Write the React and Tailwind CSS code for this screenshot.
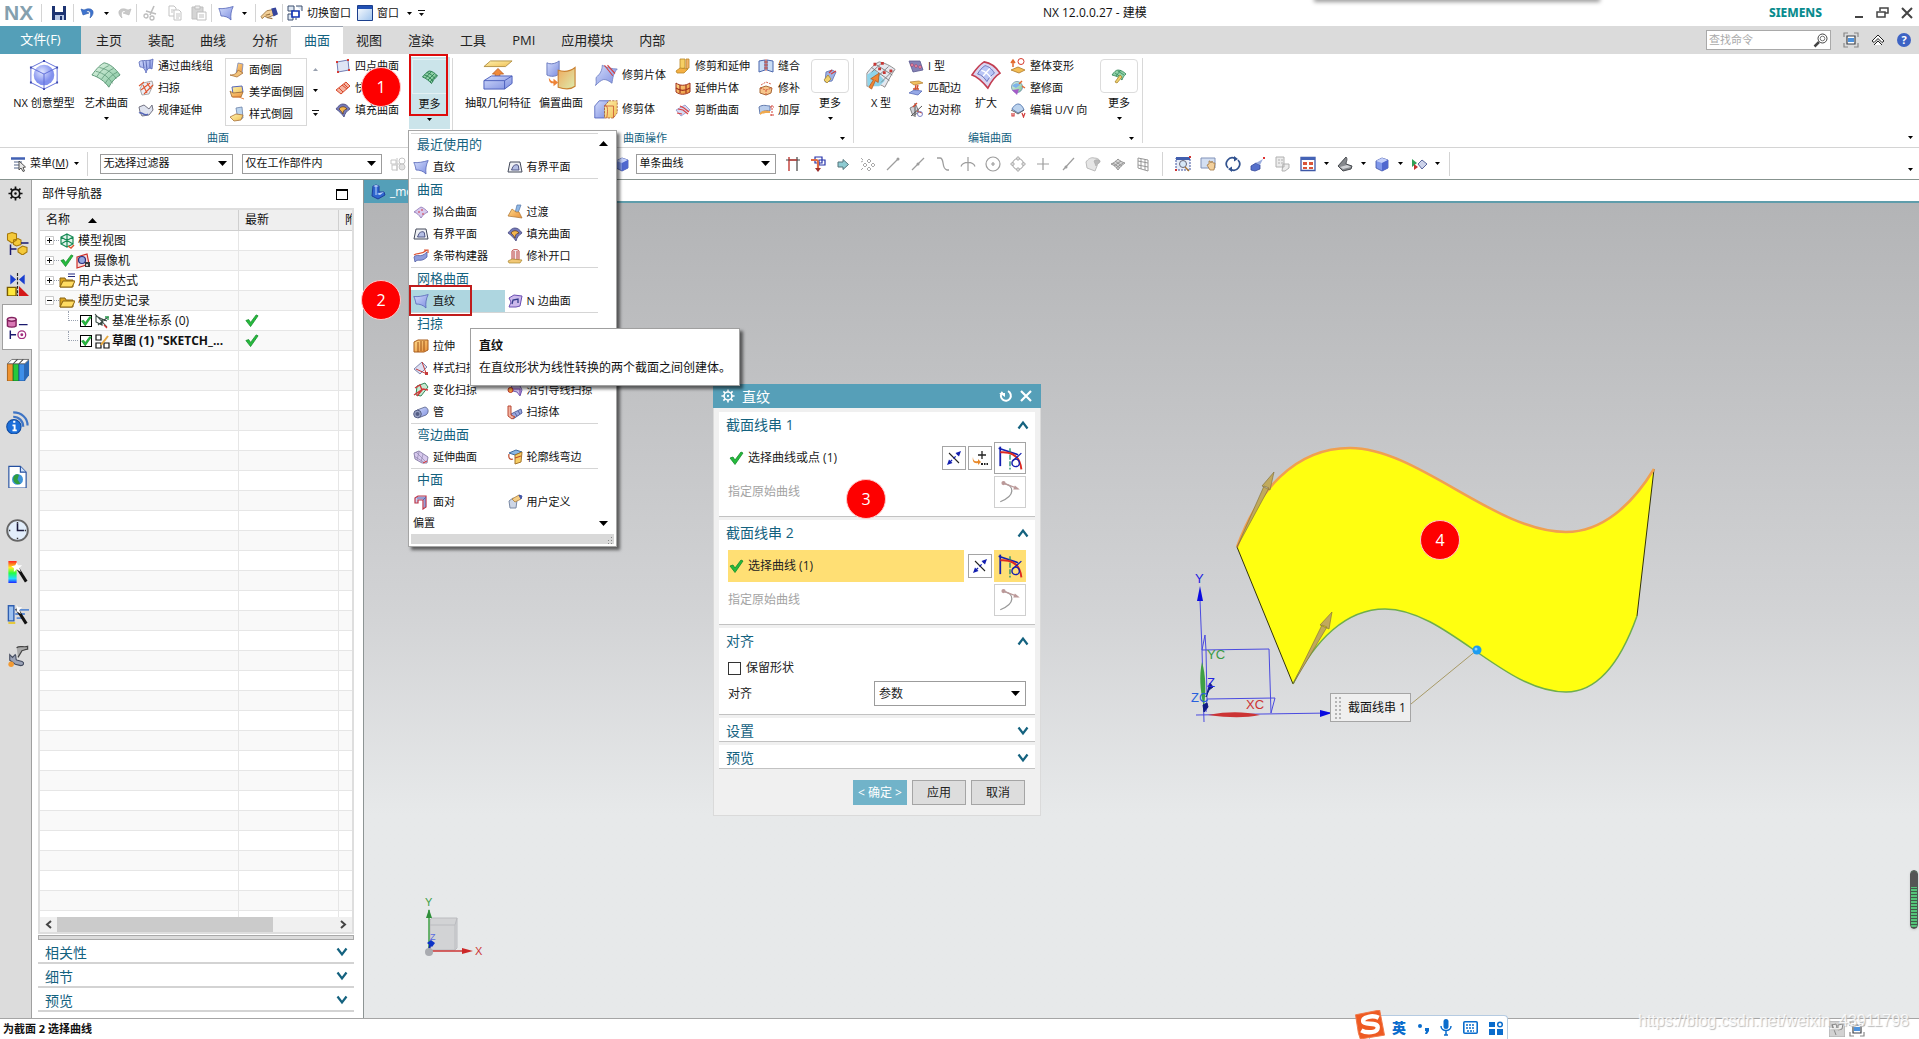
import { useState } from "react";

const icons = {
  ruled: <path d="M.8 3.500C5 4 10 3 15.200 1.500C13 6 12.500 10 13 15C10 12 7 11 3 11C2.500 8 2 6 .8 3.500Z" fill="url(#blue)" stroke="#5566b8" strokeWidth=".8" />,
  through: <><path d="M1 4C4 1 10 4 15 1L14 11C11 9 9 11 8 15C7 10 4 9 2 9Z" fill="url(#blue)" stroke="#5566b8" strokeWidth=".8" /><path d="M5 3L6 10M8 3L9 12M12 2L12 10" stroke="#4a59a8" fill="none" strokeWidth=".8" /></>,
  sweep: <><path d="M2 9L5 3L14 1L15 5L11 14L4 15Z" fill="#eceef5" stroke="#888" strokeWidth=".7" /><path d="M1 6L6 2M3 10L12 3M6 14L15 5M5 5L9 13M9 3L13 9" stroke="#e0562f" strokeWidth="1.100" fill="none" /></>,
  law: <><path d="M1 5L6 3L11 7L14 3L15 8L11 13L4 14L2 10Z" fill="#dfe3ef" stroke="#667" strokeWidth=".9" /><path d="M1 11C4 9 6 15 10 12" stroke="#5566b8" strokeWidth="1.500" fill="none" /></>,
  faceBlend: <><path d="M9 1L14 2L13 11L7 12Z" fill="url(#orange)" stroke="#7a88b8" strokeWidth=".8" /><path d="M1 13C6 13 8 11 9 8L14 11L8 15Z" fill="#f2c27a" stroke="#a8713a" strokeWidth=".8" /></>,
  aesthetic: <><path d="M3 3L13 2L14 8L4 10Z" fill="url(#yellow)" stroke="#5566b8" /><path d="M1 7L4 9L14 8L12 13L3 13Z" fill="url(#orange)" stroke="#9d6a32" strokeWidth=".8" /><path d="M4 13L10 13L15 15" stroke="#e4813b" fill="none" /></>,
  styled: <><path d="M7 2L13 1L14 12L9 14Z" fill="#bdd5ee" stroke="#6b82a8" strokeWidth=".8" /><path d="M1 11L7 8L14 9L12 14L5 15Z" fill="url(#yellow)" stroke="#a8713a" strokeWidth=".8" /></>,
  fourPoint: <><path d="M2 4L13 2L14 12L3 14Z" fill="#dfe5f4" stroke="#7580b5" /><path d="M1 3h2v2h-2zM12 1h2v2h-2zM13 11h2v2h-2zM2 13h2v2h-2z" fill="#d83a32" /></>,
  rapid: <><path d="M1 10L11 2L15 6L6 14Z" fill="#f4b2a0" stroke="#d9482b" /><path d="M4 8L8 12M7 5L12 9M9 4L13 8" stroke="#d9482b" /></>,
  fill: <><path d="M1 7C4 3 6 2 8 2C11 2 13 4 15 7C12 9 10 11 9 15C7 12 4 9 1 7Z" fill="#7478b6" stroke="#45487d" strokeWidth=".8" /><path d="M4 7C6 4 10 4 12 7C9 7 8 10 8 12C7 10 6 9 4 7Z" fill="#f4b64c" stroke="#5b3a1c" strokeWidth=".7" /></>,
  greenMesh: <><path d="M.5 8C3 5 5 3 7 2C10 2 13 4 15.500 7C13 9 11 11 9.500 14.500C7 12 4 9 .5 8Z" fill="#8fd0a6" stroke="#1d7546" strokeWidth=".9" /><path d="M2.500 6C6 7 9 9 11 12.500M5 3.500C8 4.500 11 7 13 9.500M3.500 9L9.500 2.500M6 11L12.500 4.500M8 13L14.500 6" stroke="#1d7546" strokeWidth=".8" fill="none" /></>,
  trimExtend: <><path d="M5 1L10 1L10 10L5 11Z" fill="#f6cf64" stroke="#b98626" strokeWidth=".8" /><path d="M11 1L14 1L14 10L11 11Z" fill="#f3b26c" stroke="#b98626" strokeWidth=".8" /><path d="M1 13L5 10L13 11L9 15L2 15Z" fill="#f5b043" stroke="#b98626" strokeWidth=".8" /></>,
  extendSheet: <><path d="M1 3C5 6 10 6 15 3L15 12C10 15 5 15 1 12Z" fill="url(#orange)" stroke="#a1321f" /><path d="M1 8C5 11 10 11 15 8M5 5L5 13M11 5L11 13" stroke="#a1321f" strokeWidth="1.200" fill="none" /></>,
  divide: <><path d="M1 8L10 3L15 8L6 14Z" fill="#d7daf2" stroke="#8b90c9" strokeWidth=".8" /><path d="M3 7L8 8L13 12M5 4L9 6L14 10M2 11L7 12" stroke="#dc4140" fill="none" strokeWidth="1.100" /></>,
  sew: <><path d="M1 3L7 2L7 12L1 14ZM9 2L15 3L15 14L9 12Z" fill="#c9ddf5" stroke="#4b66ad" /><path d="M8 1L8 13M6 4h4M6 7h4M6 10h4" stroke="#c0483c" strokeWidth=".9" /></>,
  patch: <><path d="M2 8L8 6L14 8L13 13L8 15L2 13Z" fill="#f7c68b" stroke="#a86a3a" /><path d="M2 8L8 10L14 8M8 10L8 15M3 5L8 2L13 4" stroke="#d1523a" strokeWidth=".9" fill="none" strokeDasharray="2 1" /></>,
  thicken: <><path d="M1 5C5 2 9 4 12 4L12 9C8 8 4 9 2 12Z" fill="#b9cdec" stroke="#647cae" /><path d="M2 11C5 8 8 8 12 9L12 11C8 11 5 11 2 13Z" fill="#f0a94e" /><path d="M14 3v12M12 5h4M12 13h4" stroke="#d44236" strokeDasharray="2 1" /></>,
  iform: <><path d="M1 3L12 3L15 12L5 14Z" fill="#8481b5" stroke="#5b598f" strokeWidth=".8" /><path d="M3 6h2v2h-2zM7 7h2v2h-2zM11 8h2v2h-2z" fill="#fff" stroke="#c7335a" strokeWidth=".8" /></>,
  match: <><path d="M2 2L11 1L15 3L6 5Z" fill="#f3c15e" stroke="#b07a2b" strokeWidth=".7" /><path d="M8 5L7 10M10 5L9 9M5 9h6" stroke="#d4502d" strokeWidth="1.400" /><path d="M1 13L6 10L14 11L10 15Z" fill="#96a9e6" stroke="#4d62b1" strokeWidth=".7" /></>,
  symmetry: <><path d="M2 6L8 3L11 10L5 14Z" fill="#d0d2d8" stroke="#777" strokeWidth=".9" /><path d="M7 1L7 15M3 14L14 4" stroke="#444" strokeWidth=".9" /><path d="M5 5L9 1M9 9L14 11" stroke="#d8482d" strokeWidth="1.300" /><circle cx="12" cy="12" r="2.500" fill="none" stroke="#7d82c9" /></>,
  deform: <><circle cx="11" cy="3.500" r="3" fill="none" stroke="#d4392c" /><path d="M3 9V3M1 5L3 2L5 5" stroke="#e2692d" fill="none" strokeWidth="1.500" /><path d="M1 12L8 9L15 12L9 15Z" fill="#f3bd54" stroke="#af7a2b" strokeWidth=".8" /></>,
  refit: <><circle cx="7" cy="7" r="5.500" fill="url(#green)" stroke="#6989a8" strokeWidth=".8" /><path d="M2 10L7 15L9 9Z" fill="#a45cc8" /><path d="M9 4L12 1M12 6L15 8" stroke="#e36a31" strokeWidth="1.500" /><path d="M2 6C5 2 9 3 10 5L6 8Z" fill="#7db2ea" /></>,
  uv: <><path d="M2 7C4 3 7 2 8 2C11 2 13 5 14 8L8 11Z" fill="#bcd3ee" stroke="#5c7fb4" /><path d="M1 8L5 10L8 12L14 8" stroke="#555" fill="none" strokeWidth=".9" /><path d="M2 11v3h2v-3M12 11L13.500 15L15 11" stroke="#d23c3c" fill="none" strokeWidth="1.200" /></>,
  moreOps: <><path d="M4 4L10 2L14 4L10 13L3 14Z" fill="#9fb2e4" stroke="#596eb0" strokeWidth=".8" /><path d="M7 5L10 2M9 6L14 3" stroke="#d44040" strokeWidth="1.300" /><path d="M2 12L6 7L9 11L5 15Z" fill="#f0d16f" stroke="#a8862f" strokeWidth=".8" /></>,
  moreEdit: <><path d="M1 7C3 4 5 2 7 2C10 2 13 4 15 6C13 8 12 9 11 12C8 9 5 8 1 7Z" fill="#8fd0a6" stroke="#2b8153" strokeWidth=".8" /><path d="M4 5L11 10M7 3L13 7M5 8L10 2" stroke="#2b8153" strokeWidth=".7" /><path d="M4 14L9 7L11 9L6 15Z" fill="#f0d16f" stroke="#a8862f" strokeWidth=".8" /></>,
  bounded: <><path d="M3 3L13 3L15 13L1 13Z" fill="#eef0f4" stroke="#444a5a" /><path d="M4.500 11L6 7.500C8 5 12 5 11.500 8L12 11Z" fill="#b4bee4" stroke="#444a7a" strokeWidth=".9" /></>,
  fit: <><path d="M1 8C4 6 6 4 8 3C11 4 13 6 15 8C12 9 10 11 8 14C6 11 4 9 1 8Z" fill="#d8caec" stroke="#8a72b4" strokeWidth=".8" /><circle cx="6" cy="8" r=".8" fill="#c23" /><circle cx="9" cy="6" r=".8" fill="#c23" /><circle cx="10" cy="10" r=".8" fill="#c23" /></>,
  transition: <><path d="M10 1L14 1L11 9L8 9Z" fill="#8fb8e6" stroke="#5475a8" strokeWidth=".7" /><path d="M5 5L9 8L12 8L15 14L8 13L1 12Z" fill="url(#orange)" stroke="#ab7330" strokeWidth=".7" /></>,
  ribbon: <><path d="M1 9C4 5 7 11 14 4L14 9C8 15 5 10 2 14Z" fill="#8e9cdc" stroke="#4f5ca3" strokeWidth=".8" /><path d="M1 7C5 4 7 8 14 2M11 2h4v3" stroke="#dc5130" strokeWidth="1.200" fill="none" /></>,
  opening: <><path d="M5 3C6 1 11 1 12 3L12 12L5 12Z" fill="#f3e9ee" stroke="#bb3f3a" /><path d="M7 3v9M10 3v9" stroke="#bb3f3a" /><path d="M1 13L5 11L15 12L13 15L2 15Z" fill="#f2c877" stroke="#a8862f" strokeWidth=".7" /></>,
  nside: <><path d="M2 5L7 2L15 3L13 13L9 14L2 14L4 9Z" fill="#ccb9ec" stroke="#6b4eb2" /><path d="M5 11L6 7L11 6L11 10" stroke="#333d8a" fill="none" strokeWidth="1.300" /></>,
  extrude: <><path d="M1 4L5 2L15 2L15 12L11 14L1 14Z" fill="url(#orange)" stroke="#a85d1d" /><path d="M5 4v10M8 3v10M11 3v10" stroke="#9c5117" /></>,
  styledSweep: <><path d="M1 9L9 2L14 7L7 14Z" fill="#dcdff2" stroke="#8186ae" /><path d="M3 9L14 14M9 2L13 13" stroke="#c53b3b" /><path d="M12 12h3v3h-3z" fill="#c53b3b" /></>,
  variational: <><path d="M4 4L12 1L15 5L8 14L3 13Z" fill="#c7ead2" stroke="#37875a" /><path d="M2 6L7 3L9 8L4 14M1 13L10 7L15 8" stroke="#d3373a" strokeWidth="1.400" fill="none" /></>,
  guide: <><path d="M4 3L12 2L15 8L13 14L10 10L6 9Z" fill="#cfbdeb" stroke="#7160b4" /><circle cx="3.500" cy="8" r="2.500" fill="#f5a13f" stroke="#b9322a" /><path d="M6 7L13 7L13 13" stroke="#7d42a5" fill="none" /></>,
  tube: <><path d="M4 6L12 3C16 4 16 9 13 11L5 14Z" fill="url(#blue)" stroke="#555e85" strokeWidth=".8" /><circle cx="4.500" cy="10" r="3.800" fill="#9aa3c5" stroke="#555e85" /><circle cx="4.500" cy="10" r="2" fill="#555e85" /></>,
  sweepSolid: <><path d="M4 10L14 5L15 9L6 15Z" fill="#9ba8dd" stroke="#54619f" /><path d="M1 2L4 2L4 11L8 13L5 15L1 12Z" fill="#f2b3a2" stroke="#b94833" /><path d="M8 9L10 12M11 7L13 10" stroke="#54619f" /></>,
  extSurface: <><path d="M1 4L6 2L15 8L14 14L9 14L2 10Z" fill="#d8c9ee" stroke="#8f86ad" /><path d="M3 3L13 13M1 7L12 14M10 5L8 13M6 3L4 11" stroke="#8f86ad" strokeWidth=".7" /><path d="M10 14L14 12" stroke="#d33" /></>,
  flange: <><path d="M2 4L9 1L15 3L8 6Z" fill="#8ab8e4" stroke="#3e6c9e" /><path d="M8 6L15 3L14 13L8 15Z" fill="#f5cd64" stroke="#a5752a" /><path d="M8 9L14 7M2 5C1 10 4 11 6 10" stroke="#bf4d2c" fill="none" strokeWidth="1.200" /></>,
  facePair: <><path d="M2 4L5 2L13 2L13 13L10 15L10 6L5 6L5 9L2 9Z" fill="#cdd0ee" stroke="#bd3548" strokeWidth="1.200" /><path d="M4 4h8v9M10 6l3-3" fill="none" stroke="#5560b0" strokeWidth=".9" /></>,
  custom: <><path d="M2 7L6 4L10 6L9 14L3 14Z" fill="#cdd6e6" stroke="#7989a5" /><path d="M5 5L12 1L14 5L8 8Z" fill="#f6ce86" stroke="#a97c38" strokeWidth=".8" /><path d="M12 1L15 2L14 5Z" fill="#4356a8" stroke="#4356a8" /></>,
  save: <><path d="M1 1h14v14h-14z" fill="#1d3472" /><path d="M4 1h8v6h-8z" fill="#fff" /><path d="M4 10h9v5h-9z" fill="#b8c8e6" /><path d="M9 11h2v4h-2z" fill="#1d3472" /></>,
  undo: <path d="M1 4L3 10L9 8L6 7C9 4 12 7 10 13C16 8 13 1 4 5Z" fill="#3d73cf" stroke="#2a57aa" strokeWidth=".6" />,
  redo: <path d="M15 4L13 10L7 8L10 7C7 4 4 7 6 13C0 8 3 1 12 5Z" fill="#c9c9c9" stroke="#b8b8b8" strokeWidth=".6" />,
  cut: <><path d="M11 1L7 10M3 6L13 9" stroke="#bdbdbd" strokeWidth="1.600" /><circle cx="3" cy="11" r="2" fill="none" stroke="#bdbdbd" strokeWidth="1.300" /><circle cx="9" cy="13" r="2" fill="none" stroke="#bdbdbd" strokeWidth="1.300" /></>,
  copy: <><path d="M2 1h5l2 2v8h-7z" fill="#fff" stroke="#c3c3c3" /><path d="M7 5h5l2 2v8h-7z" fill="#fff" stroke="#c3c3c3" /><path d="M9 9h4M9 11h4M9 13h3M4 5h3M4 7h2" stroke="#c3c3c3" /></>,
  paste: <><path d="M1 2h11v12h-11z" fill="#d5d5d5" stroke="#bfbfbf" /><path d="M4 1h5v3h-5z" fill="#eee" stroke="#bfbfbf" /><path d="M6 7h9v8h-9z" fill="#fff" stroke="#bfbfbf" /><path d="M8 10h5M8 12h5" stroke="#bfbfbf" /></>,
  hand: <><path d="M1 11L6 6L11 5L12 10L7 12L4 11L2 13Z" fill="#f3cf96" stroke="#9c7440" strokeWidth=".8" /><path d="M10 4L14 3L16 9L12 11Z" fill="#36459c" /><path d="M5 10L9 9M6 12L11 13" stroke="#9c7440" /></>,
  switch: <><path d="M1 1h6v5h-6zM9 1h6v5M1 9h5v6h-5zM9 13v2" fill="#dfe8f3" stroke="#3c4f6e" /><path d="M5 6h7v6h-7z" fill="#fff" stroke="#1335b4" strokeWidth="1.700" /></>,
  window: <><path d="M.5 .5h15v15h-15z" fill="url(#pale)" stroke="#1b3f8d" /><path d="M1 1h14v3h-14z" fill="#2150b4" /></>,
  menu: <><path d="M1 2h14M1 3h14" stroke="#4261b4" strokeWidth="1.500" /><path d="M4 6h8M4 9h5M4 12h5" stroke="#8c98b0" strokeWidth="1.400" /><path d="M9 5L9 14L11 12L13 15.500L14.500 15L13 11.500L15.500 11Z" fill="#e6e6e6" stroke="#444" strokeWidth=".9" /></>,
  greyTree: <><path d="M1 4h5v4h-5zM2 9h5v5h-5zM7 2v13M7 8h3" fill="none" stroke="#c4c4c4" /><circle cx="12" cy="5" r="3" fill="none" stroke="#c4c4c4" /><circle cx="12" cy="11" r="3" fill="#e2e2e2" stroke="#c4c4c4" /></>,
  cube: <><path d="M2 5L8 2L14 4L14 12L8 15L2 12Z" fill="#7f97ea" stroke="#3e50a6" strokeWidth=".8" /><path d="M2 5L8 7L14 4L8 2Z" fill="#c5d1fa" /><path d="M8 7L14 4L14 12L8 15Z" fill="#5068cf" /></>,
  rail: <><path d="M4 1v14" stroke="#c03a34" strokeWidth="1.400" /><path d="M12 1v14M1 4h14" stroke="#444" strokeWidth="1.200" /><path d="M4 4h8" stroke="#c03a34" strokeWidth="1.400" /></>,
  follow: <><path d="M5 1h7v6h-7zM9 4h6v5h-6z" fill="#fff" stroke="#2632a9" strokeWidth="1.200" /><path d="M1 4h5c2 0 2 1 2 3v6" stroke="#df6a44" strokeWidth="2.200" fill="none" /><path d="M5 12h6l-3 4z" fill="#9b2f2f" /></>,
  next: <path d="M3 6h5V3.500l5.500 5-5.500 5v-2.500h-5z" fill="#8ecbd2" stroke="#55757b" />,
  snap: <><path d="M9 3l2 2-2 2-2-2zM9 11l2 2-2 2-2-2zM5 7l2 2-2 2-2-2zM13 7l2 2-2 2-2-2z" fill="none" stroke="#a9a9a9" /><path d="M1 2l2 2M1 6l2-1M1 14l2-2" stroke="#a9a9a9" /></>,
  line1: <><path d="M2 14L13 3" stroke="#9d9d9d" strokeWidth="1.200" /><circle cx="13" cy="3" r="1.500" fill="#9d9d9d" /></>,
  line2: <><path d="M2 14L14 2" stroke="#9d9d9d" strokeWidth="1.200" /><circle cx="8" cy="8" r="1.500" fill="#9d9d9d" /></>,
  scurve: <path d="M2 2h3c5 0 1 11 7 12h2" stroke="#9d9d9d" strokeWidth="1.300" fill="none" />,
  arcCross: <path d="M1 10.500C3 5 13 5 15 10.500M8 1v14" stroke="#9d9d9d" strokeWidth="1.200" fill="none" />,
  circleDot: <><circle cx="8" cy="8" r="7" stroke="#9d9d9d" fill="none" strokeWidth="1.200" /><path d="M8 6v4M6 8h4" stroke="#9d9d9d" strokeWidth="1.200" /></>,
  quad: <><circle cx="8" cy="8" r="5.500" stroke="#9d9d9d" fill="none" /><path d="M7 1h2v3H7zM7 12h2v3H7zM1 7h3v2H1zM12 7h3v2h-3z" fill="#fff" stroke="#9d9d9d" strokeWidth=".8" /></>,
  plus: <path d="M8 2v12M2 8h12" stroke="#9d9d9d" strokeWidth="1.200" />,
  slash: <><path d="M3 14L14 2" stroke="#9d9d9d" strokeWidth="1.200" /><circle cx="6" cy="11" r="1.500" fill="#9d9d9d" /></>,
  greyFace: <><path d="M1 6C3 3 6 1 9 2C12 2 14 3 15 5C15 8 12 7 12 10L10 15L2 12Z" fill="#e5e5e5" stroke="#bbb" /><path d="M9 5C11 3 14 4 15 5C14 8 12 7 11 10Z" fill="#b9b9b9" stroke="#aaa" strokeWidth=".7" /></>,
  greyMesh: <><path d="M1 8C4 7 6 5 8 3C10 5 12 6 15 7C12 9 10 11 8 14C6 11 4 9 1 8Z" fill="#d4d4d4" stroke="#979797" /><path d="M5 5L12 10M3 7L10 12M4 10L11 5M6 12L13 7" stroke="#979797" /></>,
  greyGrid: <path d="M3 2L13 4V15L3 12ZM6 3v10M10 3v11M3 5l10 2M3 9l10 2" fill="none" stroke="#979797" />,
  zoomFit: <><path d="M1 2h14v12H1z" fill="#e7edf8" stroke="#3f539e" strokeDasharray="2 1" /><path d="M1 1h14v3H1z" fill="#425fae" /><circle cx="8" cy="8" r="3.500" fill="#d6e7f6" stroke="#667" /><path d="M10 11l4 4" stroke="#a8732f" strokeWidth="1.500" /><path d="M0 13h2v2H0zM14 0h2v2h-2z" fill="#c33" /></>,
  pan: <><path d="M1 2h14v10H1z" fill="#d3dff2" stroke="#8192b8" /><path d="M7 9L9 8V5h1l1 2 1-2 1 2 2 0L14 14H10Z" fill="#f3d09b" stroke="#a37a45" strokeWidth=".8" /></>,
  rotate: <><path d="M3 12A6 6 0 0 1 10 2.500M13 4A6 6 0 0 1 6 13.500" stroke="#31528f" strokeWidth="1.700" fill="none" /><path d="M9 0l4 3-4 2.500zM7 16l-4-3 4-2.500z" fill="#31528f" /></>,
  perspective: <><path d="M1 10L6 7L10 9L10 13L5 15L1 14Z" fill="#5570cb" stroke="#33479a" strokeWidth=".8" /><path d="M6 7L13 3L10 9Z" fill="#9badde" /><path d="M13 1h2v2h-2z" fill="#d33" /></>,
  greySheets: <path d="M1 1h8v10H1zM3 4h2M6 4h2M3 7h2M6 7h2M8 8h6v4L10 15H7z" fill="#ececec" stroke="#b0b0b0" />,
  windowRed: <><path d="M1 1.500h14v13H1z" fill="#fff" stroke="#3e58a8" strokeWidth="1.300" /><path d="M1 1h14v3H1z" fill="#4463b6" /><path d="M3 6h4v3H3zM9 6h4v3H9zM3 11h4v2H3zM9 11h4v2H9z" fill="#d9563b" /></>,
  greySolid: <><path d="M1 10L9 1C11 3 9 6 9 8L15 10L14 13L6 15Z" fill="#85888c" stroke="#484b50" /><path d="M3 11L10 9L14 11L6 13Z" fill="#d0d2d5" /></>,
  clip: <><path d="M1 3L6 7L1 11Z" fill="#2fa157" /><path d="M3 8l4 3-4 3z" fill="#c23131" /><path d="M11 4l5 4-5 5-4-5z" fill="#cdd3ea" stroke="#59669d" /></>,
  full: <><path d="M1 5V1H5M11 1h4v4M15 11v4h-4M5 15H1v-4" fill="none" stroke="#888" strokeWidth="1.200" /><path d="M4 4h8v8H4z" fill="#fff" stroke="#3d4148" strokeWidth="1.200" /><path d="M5 6h6v4H5z" fill="#4d92dd" /></>,
  doc: <><path d="M3 2L6 1L9 2V8L14 8L15 11L8 15L2 12Z" fill="#2f66cf" stroke="#1e3f9c" /><path d="M3 2L6 1L9 2L6 3ZM9 9L14 8L10 11L7 10Z" fill="#bcd5fb" /><path d="M6 3V11" stroke="#bcd5fb" /></>,
  gear: <><circle cx="8" cy="8" r="4.500" fill="none" stroke="currentColor" strokeWidth="1.800" /><circle cx="8" cy="8" r="1.300" fill="currentColor" /><path d="M8 .5v3M8 12.500v3M.5 8h3M12.500 8h3M2.700 2.700l2 2M11.300 11.300l2 2M2.700 13.300l2-2M11.300 4.700l2-2" stroke="currentColor" strokeWidth="1.800" /></>,
  views: <><path d="M8 1L14 4V11L8 14L2 11V4ZM8 1V14M2 4L14 11M14 4L2 11" fill="#e5f4ec" stroke="#168a54" strokeWidth="1.200" /><path d="M9 13l3 2 3-3" stroke="#e0562f" strokeWidth="1.400" fill="none" /></>,
  camera: <><path d="M2 4L12 1L14 11L2 15Z" fill="#f6dada" stroke="#cc2b25" strokeWidth="1.200" /><circle cx="7" cy="7" r="3.500" fill="#94a7e0" stroke="#2b2f7e" strokeWidth="1.200" /><path d="M10 9h5v5h-5z" fill="#3b3b3b" /><circle cx="12" cy="12" r="1" fill="#fff" /></>,
  folder: <><path d="M1 5h5l1 2h7v7H1z" fill="#dca520" stroke="#8a6413" /><path d="M1 14L4 8H16L13 14Z" fill="#ffdc63" stroke="#8a6413" /></>,
  folderEq: <><path d="M1 5h5l1 2h7v7H1z" fill="#dca520" stroke="#8a6413" /><path d="M1 14L4 8H16L13 14Z" fill="#ffdc63" stroke="#8a6413" /><path d="M9 1h7M9 3.500h7" stroke="#23297f" /></>,
  csys: <><path d="M1 1L13 14M2 3L8 6V12L2 9ZM4 12L14 4M8 6L13 8" stroke="#3a4a44" fill="none" strokeWidth="1.100" /><path d="M11 4h4M14 4v3" stroke="#2f9b52" strokeWidth="1.300" /><path d="M10 12l3 3" stroke="#d33" strokeWidth="1.300" /></>,
  sketch: <><path d="M2 2h5v5H2zM2 10h5v5H2zM10 10h5v5h-5z" fill="#fff" stroke="#111" strokeWidth="1.200" /><path d="M7 12L14 3" stroke="#e5a63d" strokeWidth="2" /></>,
  tick: <path d="M2 8L5 7L7 10L13 2L15 3L7 14.500Z" fill="#25bb3c" stroke="#138a2a" strokeWidth=".8" />,
  reverse: <><path d="M3 3L13 13" stroke="#222" strokeWidth="1.100" /><path d="M4 12L12 4" stroke="#1420b0" strokeWidth="1.200" strokeDasharray="3 2" /><path d="M15 1L9.500 3L13 6.500ZM1 15L3 9.500L6.500 13Z" fill="#1420b0" /></>,
  origin: <><path d="M10 1v8M6 5h8" stroke="#222" strokeWidth="1.300" /><path d="M1 7C1 11 3 12 6 11V9L9 12L6 15V13C2 14 0 11 1 7Z" fill="#e98a2b" /><path d="M9 13h2v2H9zM12 13h1.500v2H12zM14.500 13H16v2h-1.500z" fill="#222" /></>,
  curveRule: <><path d="M2 1v12" stroke="#1420b0" strokeWidth="1.100" /><path d="M1 2L13 6" stroke="#1420b0" /><path d="M8 2v13" stroke="#1c8a6a" strokeDasharray="3 1" strokeWidth=".8" /><path d="M2 4.500C8 4 14 6 15 15" stroke="#dd2a22" strokeWidth="1.200" fill="none" /><path d="M15 5L9.500 10" stroke="#1420b0" strokeWidth=".8" /><circle cx="11.500" cy="11" r="2.300" fill="none" stroke="#1420b0" strokeWidth=".9" /></>,
  originCurve: <><path d="M2 14C12 10 10 4 5 3" stroke="#999" strokeWidth=".8" fill="none" /><circle cx="4" cy="2.500" r="1.300" fill="#b99" /><path d="M4 2.500L13 6" stroke="#b99" strokeWidth=".8" /><path d="M14 6.500L10 6.500L11 4Z" fill="#b99" /></>,
  assembly: <><path d="M1 2L4 1L7 2V6L4 8L1 6ZM5 6L8 5L10 6V9L7 10L5 9Z" fill="#f4c93a" stroke="#a87908" strokeWidth=".7" /><path d="M10 8h5M3 9v7M3 12h4" stroke="#1a1a6e" /><path d="M8 12L11 10L14 11V14L11 16L8 14Z" fill="#f4c93a" stroke="#a87908" strokeWidth=".7" /></>,
  constraint: <><path d="M3 1v7l4-3.500zM13 1v7L9 4.500z" fill="#1a3fd0" /><path d="M8 0v16" stroke="#222" strokeDasharray="2 1" strokeWidth=".8" /><path d="M1 10h6v6H1z" fill="#ffe83b" stroke="#7a5c00" /><path d="M9 9v7h7z" fill="#d41818" /></>,
  partNav: <><path d="M1 2v5c1 1 5 1 6 0V2" fill="#d978b4" stroke="#83225f" /><ellipse cx="4" cy="2.300" rx="3" ry="1.300" fill="#f3bfe0" stroke="#83225f" /><path d="M9 6h6M3 10v6M3 13h4" stroke="#1a1a6e" /><circle cx="11" cy="13" r="2.700" fill="#fff" stroke="#a22d7e" strokeWidth=".9" /><circle cx="11" cy="13" r="1" fill="#a22d7e" /></>,
  books: <><path d="M1 4h4v12H1z" fill="#ef9330" stroke="#a55c0e" strokeWidth=".6" /><path d="M5 4h4v12H5z" fill="#28c83c" stroke="#0f7a1e" strokeWidth=".6" /><path d="M9 4h4v12H9z" fill="#3f8fe8" stroke="#1c4f97" strokeWidth=".6" /><path d="M13 4l3-3v11l-3 4z" fill="#2969b8" /><path d="M1 4l3-3h12l-3 3z" fill="#fff" stroke="#666" strokeWidth=".6" /><path d="M5 4l3-3M9 4l3-3" stroke="#444" strokeWidth=".7" /></>,
  info: <><circle cx="5.500" cy="11" r="5" fill="#1c6fda" stroke="#0f4aa0" strokeWidth=".7" /><path d="M5 7.500h1.500M4.500 10h1.500v3.500M4.500 13.500h3" stroke="#fff" strokeWidth="1.300" fill="none" /><path d="M5 4C9 4 12 7 12 11M5 1C11 1 15 5 15 10" stroke="#3e74c4" strokeWidth="1.500" fill="none" /></>,
  globe: <><path d="M2 1h8l4 4v11H2z" fill="#fff" stroke="#2450a0" strokeWidth=".8" /><path d="M10 1v4h4" fill="#cfe0f8" stroke="#2450a0" strokeWidth=".8" /><circle cx="8" cy="10" r="3.800" fill="#3e92d8" /><path d="M5 9c1-3 3-3 4-2L8 10l2 3c-3 1-5-1-5-4z" fill="#2f9d3d" /></>,
  clock: <><circle cx="8" cy="8" r="7.200" fill="#e2eefb" stroke="#666" strokeWidth="1.300" /><path d="M8 3v5h4.500" stroke="#1a1a3c" strokeWidth="1.100" fill="none" /><path d="M8 2v1M8 13v1M2 8h1M13 8h1" stroke="#333" /></>,
  rainbow: <><path d="M1 0h6v16H1z" fill="url(#rainbow)" /><path d="M7 4L14 15" stroke="#111" strokeWidth="2.200" /><path d="M7 1l1 2 3 0-2 2 1 3-3-2-2 2 0-3-2-1 3-1z" fill="#fff" /></>,
  wand: <><path d="M1 2h4v11H1z" fill="#9cc1f0" stroke="#2f5fb0" /><path d="M6 5h10M6 8h7M7 11h4" stroke="#5d8cd2" strokeWidth="1.400" /><path d="M7 4L14 15" stroke="#111" strokeWidth="2.200" /><path d="M1 14.500h5" stroke="#e6c93a" strokeWidth="1.500" /><path d="M7 1l1 2 3 0-2 2 1 3-3-2z" fill="#fff" /></>,
  tools: <><path d="M7 2C9 0 12 2 15 1L15 3C13 3 13 4 11 4L8 9" stroke="#444" strokeWidth=".9" fill="#aaa" /><path d="M2 7l2 2 2-2c1 1 0 3 1 4l4 1c2 1 1 3-1 3l-4-1-4-3z" fill="#9aa2b6" stroke="#444c60" strokeWidth=".8" /><circle cx="3" cy="14" r="2" fill="#f29a33" /></>,
  flag: <><path d="M0 0h16v16H0z" fill="#d2d2d2" stroke="#aaa" /><path d="M3 3L7 14M3 4l4-1 1 4-4 1zM9 4l5-1-1 5-4 1z" stroke="#888" fill="#f0f0f0" /></>,
};

const bigIcons = {
  realize: <><circle cx="16" cy="16" r="11" fill="url(#sphere)" /><path d="M16 1L30 8V24L16 31L2 24V8ZM2 8L16 15L30 8M16 15V31" fill="none" stroke="#5d6bd6" strokeWidth="1" /><path d="M15 0h2v2h-2zM1 7h2v2H1zM29 7h2v2h-2zM1 23h2v2H1zM29 23h2v2h-2zM15 30h2v2h-2z" fill="#3c49ae" /></>,
  studio: <><path d="M1 16C6 9 10 5 14 3C20 4 26 9 31 16C26 19 22 23 19 29C15 23 8 18 1 16Z" fill="url(#green)" stroke="#5a9474" /><path d="M5 12C14 14 19 19 23 25M9 8C18 10 23 14 27 20M6 18C9 13 14 8 19 6M11 21C14 16 19 11 24 9M15 25C18 20 23 15 28 13" fill="none" stroke="#5a9474" strokeWidth=".8" /></>,
  extract: <><path d="M1 7L8 1H31L24 7Z" fill="url(#yellow)" stroke="#b29145" /><path d="M16 9L22 15H18V23H13V15H10Z" fill="#f08a3a" stroke="#b35a1d" strokeWidth=".8" /><path d="M1 22L9 17H31V25L23 31H1Z" fill="url(#blue)" stroke="#4b5ebb" /><path d="M1 22H23V31M23 22L31 17" fill="none" stroke="#4b5ebb" /></>,
  offset: <><path d="M1 3C5 5 10 4 14 1V15C10 18 5 18 1 16Z" fill="url(#blue)" stroke="#6677bd" /><path d="M13 11C19 13 26 12 31 8V28C26 32 19 31 13 29Z" fill="url(#lime)" stroke="#c9802f" strokeWidth="1.200" /><path d="M3 19C3 24 5 25 8 25V28L13 24L8 20V23C6 23 5 22 3 19Z" fill="#ee8337" /></>,
  trimSheet: <><path d="M11 3C16 6 24 8 31 8C26 13 25 20 24 27C20 24 17 22 13 22C9 23 6 26 2 30C4 26 2 22 3 19C8 15 11 10 11 3Z" fill="url(#blue)" stroke="#6677bd" /><path d="M14 3L25 17M18 3L28 14" stroke="#d44040" strokeWidth="1.500" /></>,
  trimBody: <><path d="M1 12L7 5H20L14 12V28H1Z" fill="url(#blue)" stroke="#4355b5" /><path d="M14 12L20 5H31V21L26 28H14Z" fill="url(#yellow)" stroke="#a1522d" strokeDasharray="3 1.500" /><path d="M14 12C18 10 19 16 17 28M14 12H26V28" stroke="#c94b2d" fill="none" /></>,
  xform: <><path d="M1 14C5 9 9 4 14 2C20 3 26 6 31 10C27 15 24 22 20 29C14 24 8 27 1 28Z" fill="#e6e8ef" stroke="#888" /><path d="M1 16L9 10L20 22L14 28L2 28Z" fill="#8fd4ea" /><path d="M6 8L25 22M11 5L28 16M6 13L17 3M12 18L24 7M16 24L29 11" stroke="#777" strokeWidth=".9" fill="none" /><path d="M8 3h3v3H8zM13 8h3v3h-3zM18 12h3v3h-3zM25 10h3v3h-3zM16 2h3v3h-3z" fill="#c73735" /><path d="M3 29L8 21L5 20L14 14L13 24L10 22L6 31Z" fill="#ef8534" stroke="#b35a1d" strokeWidth=".8" /></>,
  enlarge: <><path d="M1 16C5 10 9 5 14 2C21 3 27 8 31 14C26 17 22 22 18 30C13 24 8 18 1 16Z" fill="#d9d5f1" stroke="#c33d50" strokeWidth="1.700" /><path d="M7 15C9 11 12 8 15 6C19 7 22 9 25 14C22 16 19 19 17 23C14 19 12 16 7 15Z" fill="#b9c5f5" stroke="#6674bb" /><path d="M11 11C15 12 18 14 21 19M13 17L20 9" fill="none" stroke="#fff" strokeWidth="1.500" /></>,
};

function clsName(...names) {
  return names.filter(Boolean).join(" ");
}

function Icon({ name, size = 16 }) {
  return <svg width={size} height={size} viewBox="0 0 16 16" className="shrink-0" aria-hidden="true">{icons[name]}</svg>;
}

function BigIcon({ name, size = 30 }) {
  return <svg width={size} height={size} viewBox="0 0 32 32" className="shrink-0" aria-hidden="true">{bigIcons[name]}</svg>;
}

function Gradients() {
  const two = [["blue", "#d3dcfb", "#7d8ee0"], ["orange", "#ffd98a", "#e8903a"], ["green", "#e4f6e6", "#7cc29a"], ["yellow", "#fff2ae", "#efbf55"], ["lime", "#f0a95c", "#dcedb0"], ["pale", "#ffffff", "#9fc4ee"]];
  return (
    <svg width="0" height="0" className="absolute" aria-hidden="true">
      <defs>
        {two.map(([id, a, b]) => <linearGradient key={id} id={id} x1="0" y1="0" x2="1" y2="1"><stop offset="0" stopColor={a} /><stop offset="1" stopColor={b} /></linearGradient>)}
        <radialGradient id="sphere" cx=".4" cy=".35"><stop offset="0" stopColor="#e0e6ff" /><stop offset="1" stopColor="#8291ee" /></radialGradient>
        <linearGradient id="rainbow" x1="0" y1="0" x2="0" y2="1"><stop offset="0" stopColor="#f22" /><stop offset=".3" stopColor="#fe2" /><stop offset=".55" stopColor="#2f4" /><stop offset=".8" stopColor="#2df" /><stop offset="1" stopColor="#22f" /></linearGradient>
      </defs>
    </svg>
  );
}

function Caret({ wide, up, muted }) {
  return (
    <svg width={wide ? 9 : 5} height={wide ? 5 : 3} viewBox="0 0 10 6" preserveAspectRatio="none" className={clsName("shrink-0", muted ? "text-gray-400" : "text-black")} aria-hidden="true">
      <path d={up ? "M0 6L5 0L10 6Z" : "M0 0H10L5 6Z"} fill="currentColor" />
    </svg>
  );
}

function OverflowCaret() {
  return <svg width="7" height="7" viewBox="0 0 7 7" className="shrink-0" aria-hidden="true"><path d="M0 0h7v1H0zM1 3h5L3.500 6Z" fill="#111" /></svg>;
}

function Chevron({ up }) {
  return <svg width="12" height="10" viewBox="0 0 12 10" className="shrink-0" aria-hidden="true"><path d={up ? "M1.500 8.500L6 2.500L10.500 8.500" : "M1.500 1.500L6 7.500L10.500 1.500"} fill="none" stroke="#14627f" strokeWidth="2.200" /></svg>;
}

function Step({ n, className }) {
  return <span className={clsName("absolute z-40 flex size-10 items-center justify-center rounded-full border border-red-200 bg-[#fe0000] text-base text-white", className)}>{n}</span>;
}

function Divider() {
  return <span className="h-[18px] w-px shrink-0 bg-[#d4d4d4]" />;
}

function TitleBar() {
  return (
    <div className="relative flex h-[26px] items-center pl-1 text-[11px]">
      <span className="w-[37px] text-[21px] leading-5 font-bold text-[#84a0ae] font-['Liberation_Sans',sans-serif]">NX</span>
      <Divider />
      <div className="flex w-[31px] justify-center pl-0.5"><button aria-label="保存"><Icon name="save" /></button></div>
      <Divider />
      <button aria-label="撤消" className="ml-1.5"><Icon name="undo" /></button>
      <span className="ml-2 flex w-3"><Caret /></span>
      <button aria-label="重做"><Icon name="redo" /></button>
      <span className="w-1" /><Divider />
      <div className="flex w-[74px] items-center justify-around pl-0.5">
        <button aria-label="剪切"><Icon name="cut" /></button>
        <button aria-label="复制"><Icon name="copy" /></button>
        <button aria-label="粘贴"><Icon name="paste" /></button>
      </div>
      <Divider />
      <button aria-label="直纹" className="ml-1.5"><Icon name="ruled" /></button>
      <span className="mx-2"><Caret /></span>
      <Divider />
      <button aria-label="触控" className="mx-1"><Icon name="hand" size={18} /></button>
      <Divider />
      <button className="ml-1 flex items-center gap-1"><Icon name="switch" />切换窗口</button>
      <button className="ml-1.5 flex items-center gap-1"><Icon name="window" />窗口<span className="ml-1"><Caret /></span></button>
      <span className="ml-1.5"><OverflowCaret /></span>
      <h1 className="absolute left-[57%] w-max -translate-x-1/2 pl-0.5 text-[12px] leading-5">NX 12.0.0.27 - 建模</h1>
      <span className="absolute -top-1 left-[68.5%] h-1 w-[284px] bg-gray-200 shadow-[0_1px_4px_1px_#9a9a9a]" />
      <span className="mr-8 ml-auto text-[12px] leading-5 font-extrabold text-[#0a8c8e] font-['Noto_Sans',sans-serif]">SIEMENS</span>
      <div className="flex items-center gap-3 pr-1.5 text-[#444]">
        <button aria-label="最小化"><svg width="10" height="12"><path d="M1 10h8" stroke="currentColor" strokeWidth="2" /></svg></button>
        <button aria-label="还原"><svg width="13" height="12"><path d="M4 4V1h8v5H9M1 5h8v5H1z" fill="none" stroke="currentColor" strokeWidth="1.500" /></svg></button>
        <button aria-label="关闭"><svg width="12" height="12"><path d="M1 1l10 10M11 1L1 11" stroke="currentColor" strokeWidth="2" /></svg></button>
      </div>
    </div>
  );
}

const tabs = ["主页", "装配", "曲线", "分析", "曲面", "视图", "渲染", "工具", "PMI", "应用模块", "内部"];

function TabBar() {
  const [active, setActive] = useState("曲面");
  return (
    <nav className="flex h-7 items-stretch bg-[#dbdbdb] text-[13px] text-[#222]">
      <button className="mr-0.5 w-[81px] bg-[#549fb8] text-white">文件(F)</button>
      {tabs.map((tab) => (
        <button key={tab} onClick={() => setActive(tab)} className={clsName("border-t px-[13px]", tab === active ? "border-gray-400 bg-white text-[#14627f]" : "border-transparent")}>{tab}</button>
      ))}
      <div className="ml-auto flex items-center gap-3 pr-2">
        <label className="flex h-5 w-[125px] items-center border border-[#a9a9a9] bg-white pr-0.5">
          <input aria-label="查找命令" placeholder="查找命令" className="w-0 flex-1 px-0.5 text-[11px] outline-none placeholder:text-[#aaa]" />
          <svg width="15" height="15" viewBox="0 0 15 15"><circle cx="9.500" cy="5.500" r="4.500" fill="none" stroke="#444" /><circle cx="9.500" cy="5.500" r="2.300" fill="none" stroke="#777" /><path d="M6 9L1.500 13.500" stroke="#444" strokeWidth="2.500" /></svg>
        </label>
        <button aria-label="全屏"><Icon name="full" /></button>
        <button aria-label="最小化功能区"><svg width="14" height="12"><path d="M1 7L7 1L13 7L11 8.500L7 4.500L3 8.500ZM3 11L7 7L11 11" fill="#fff" stroke="#222" /></svg></button>
        <button aria-label="帮助" className="flex size-[14px] items-center justify-center rounded-full bg-[#3d63c4] text-[11px] leading-3 font-bold text-white">?</button>
      </div>
    </nav>
  );
}

function Tool({ icon, label, big }) {
  return <button className="flex h-[22px] items-center gap-1 whitespace-nowrap">{big ? <BigIcon name={icon} size={24} /> : <Icon name={icon} />}{label}</button>;
}

function BigTool({ icon, label, menu, className }) {
  return (
    <button className={clsName("flex flex-col items-center self-start whitespace-nowrap", className)}>
      <span className="mt-1.5 h-[33px]"><BigIcon name={icon} /></span>
      <span className="h-5 leading-5">{label}</span>
      {menu && <span className="mt-1"><Caret /></span>}
    </button>
  );
}

function MoreTool({ icon }) {
  return (
    <button className="flex w-[38px] flex-col items-center">
      <span className="mt-[5px] flex h-[34px] w-full items-center justify-center rounded border border-[#dcdcdc]"><Icon name={icon} /></span>
      <span className="h-5 leading-5">更多</span>
      <span className="mt-1"><Caret /></span>
    </button>
  );
}

function Group({ title, menu, children }) {
  return (
    <section className="my-1 flex flex-col border-r border-[#d8d8d8]">
      <div className="-mt-1 flex h-20 items-start">{children}</div>
      <div className="relative flex h-2 items-center justify-center text-[#14627f]">
        {title}
        {menu && <span className="absolute right-2"><Caret /></span>}
      </div>
    </section>
  );
}

const menuSections = [
  { title: "最近使用的", items: [["ruled", "直纹"], ["bounded", "有界平面"]] },
  { title: "曲面", items: [["fit", "拟合曲面"], ["transition", "过渡"], ["bounded", "有界平面"], ["fill", "填充曲面"], ["ribbon", "条带构建器"], ["opening", "修补开口"]] },
  { title: "网格曲面", items: [["ruled", "直纹"], ["nside", "N 边曲面"]], active: 0 },
  { title: "扫掠", items: [["extrude", "拉伸"], ["sweep", "扫掠"], ["styledSweep", "样式扫掠"], ["sweep", "截面曲面"], ["variational", "变化扫掠"], ["guide", "沿引导线扫掠"], ["tube", "管"], ["sweepSolid", "扫掠体"]] },
  { title: "弯边曲面", items: [["extSurface", "延伸曲面"], ["flange", "轮廓线弯边"]] },
  { title: "中面", items: [["facePair", "面对"], ["custom", "用户定义"]] },
];

function MoreMenu() {
  return (
    <div className="absolute top-[76px] -left-px z-20 w-[209px] border border-[#a5a5a5] bg-white p-0.5 text-left shadow-[3px_3px_3px_rgba(0,0,0,0.55)]">
      {menuSections.map((section) => (
        <div key={section.title} className="w-[187px] border-t border-[#d5d5d5]">
          <h3 className="h-[22px] pl-1.5 text-[13px] leading-5 text-[#14627f]">{section.title}</h3>
          <div className="grid grid-cols-2">
            {section.items.map(([icon, label], i) => (
              <button key={i} className={clsName("flex h-[22px] items-center gap-1 pl-0.5 whitespace-nowrap", section.active === i && "bg-[#aed6e0]")}><Icon name={icon} />{label}</button>
            ))}
          </div>
        </div>
      ))}
      <div className="flex h-[21px] items-center justify-between pr-1.5 pl-0.5">偏置<Caret wide /></div>
      <div className="flex h-2.5 items-end justify-end bg-[#d9d9d9]"><svg width="8" height="8" aria-hidden="true"><path d="M5 1h1v1H5zM2 4h1v1H2zM5 4h1v1H5zM2 7h1v1H2zM5 7h1v1H5z" fill="#888" /></svg></div>
      <span className="absolute top-2.5 right-2"><Caret wide up /></span>
      <span className="absolute top-[154px] left-0 h-[31px] w-[63px] border-2 border-[#c01c1c]" />
      <div role="tooltip" className="absolute top-[197px] left-[61px] h-[58px] w-[270px] border border-[#a0a0a0] bg-white px-2 pt-1.5 text-[12px] leading-[22px] shadow-[3px_3px_3px_rgba(0,0,0,0.55)]">
        <b className="block">直纹</b>
        <p className="whitespace-nowrap">在直纹形状为线性转换的两个截面之间创建体。</p>
      </div>
      <Step n={2} className="top-[149px] -left-12" />
    </div>
  );
}

function Ribbon() {
  return (
    <div className="relative flex h-[94px] border-b border-[#d4d4d4] text-[11px]">
      <Group title={<span className="-ml-4">曲面</span>}>
        <BigTool icon="realize" label="NX 创意塑型" className="ml-2 w-[72px]" />
        <BigTool icon="studio" label="艺术曲面" menu className="w-[52px]" />
        <div className="ml-1.5 w-[87px] pt-px">
          <Tool icon="through" label="通过曲线组" />
          <Tool icon="sweep" label="扫掠" />
          <Tool icon="law" label="规律延伸" />
        </div>
        <div className="mt-1 h-[68px] w-[82px] border border-[#d8d8d8] pl-[3px]">
          <Tool icon="faceBlend" label="面倒圆" />
          <Tool icon="aesthetic" label="美学面倒圆" />
          <Tool icon="styled" label="样式倒圆" />
        </div>
        <div className="flex w-4 flex-col items-center gap-[18px] pt-3.5"><Caret up muted /><Caret /><OverflowCaret /></div>
        <div className="ml-3 w-[74px] pt-px">
          <Tool icon="fourPoint" label="四点曲面" />
          <Tool icon="rapid" label="快速造面" />
          <Tool icon="fill" label="填充曲面" />
        </div>
        <div className="relative mr-0.5 w-[41px]">
          <button className="mt-[3px] flex h-[72px] w-full flex-col items-center bg-[#cbe4ea]">
            <span className="mt-0.5 flex h-[35px] w-[35px] items-center justify-center border border-[#e4f1f4]"><Icon name="greenMesh" /></span>
            <span className="h-5 leading-5">更多</span>
            <span className="mt-1"><Caret /></span>
          </button>
          <span className="absolute top-0 left-0 h-[62px] w-[39px] border-2 border-[#dd0b0b]" />
          <Step n={1} className="top-[13px] -left-12" />
          <MoreMenu />
        </div>
      </Group>
      <Group title={<span className="-ml-4">曲面操作</span>} menu>
        <BigTool icon="extract" label="抽取几何特征" className="ml-[7px] w-[76px]" />
        <BigTool icon="offset" label="偏置曲面" className="w-[50px]" />
        <div className="ml-2 flex w-[81px] flex-col gap-3 pt-2.5">
          <Tool icon="trimSheet" label="修剪片体" big />
          <Tool icon="trimBody" label="修剪体" big />
        </div>
        <div className="w-[83px] pt-px">
          <Tool icon="trimExtend" label="修剪和延伸" />
          <Tool icon="extendSheet" label="延伸片体" />
          <Tool icon="divide" label="剪断曲面" />
        </div>
        <div className="w-[53px] pt-px">
          <Tool icon="sew" label="缝合" />
          <Tool icon="patch" label="修补" />
          <Tool icon="thicken" label="加厚" />
        </div>
        <div className="pr-1"><MoreTool icon="moreOps" /></div>
      </Group>
      <Group title={<span className="-ml-4">编辑曲面</span>} menu>
        <BigTool icon="xform" label="X 型" className="w-[54px]" />
        <div className="w-14 pt-px">
          <Tool icon="iform" label="I 型" />
          <Tool icon="match" label="匹配边" />
          <Tool icon="symmetry" label="边对称" />
        </div>
        <BigTool icon="enlarge" label="扩大" className="w-11" />
        <div className="ml-0.5 w-[90px] pt-px">
          <Tool icon="deform" label="整体变形" />
          <Tool icon="refit" label="整修面" />
          <Tool icon="uv" label="编辑 U/V 向" />
        </div>
        <div className="pr-1"><MoreTool icon="moreEdit" /></div>
      </Group>
      <div className="flex flex-1 items-end justify-end pr-1.5 pb-2"><Caret /></div>
    </div>
  );
}

function Select({ label, options, className, id }) {
  return (
    <span className={clsName("relative flex items-center border border-[#9c9c9c] bg-white", className)}>
      <select id={id} aria-label={label} className="h-full w-full appearance-none bg-transparent outline-none">
        {options.map((o) => <option key={o}>{o}</option>)}
      </select>
      <span className="pointer-events-none absolute right-[5px]"><Caret wide /></span>
    </span>
  );
}

function Cells({ names }) {
  return names.map((n) => <button key={n} aria-label={n} className="flex w-[25px] justify-center"><Icon name={n} /></button>);
}

function SelectionBar() {
  return (
    <div className="flex h-8 shrink-0 items-center border-b border-[#87938f] text-[11px]">
      <button className="ml-2.5 flex items-center gap-1"><Icon name="menu" /><span className="mr-0.5">菜单(<u>M</u>)</span><Caret /></button>
      <span className="ml-2 h-6 w-px bg-[#d4d4d4]" />
      <Select label="选择过滤器" options={["无选择过滤器"]} className="ml-3 h-5 w-[133px] pl-0.5" />
      <Select label="选择范围" options={["仅在工作部件内"]} className="ml-[9px] h-5 w-[140px] pl-0.5" />
      <span className="ml-2 w-[224px]"><Icon name="greyTree" /></span>
      <span className="w-[22px]"><Icon name="cube" /></span>
      <Select label="曲线规则" options={["单条曲线"]} className="h-5 w-[140px] pl-0.5" />
      <div className="ml-1 flex">
        <Cells names={["rail", "follow", "next", "snap", "line1", "line2", "scurve", "arcCross", "circleDot", "quad", "plus", "slash", "greyFace", "greyMesh", "greyGrid"]} />
      </div>
      <span className="mx-[7px] h-6 w-px bg-[#d4d4d4]" />
      <div className="flex">
        <Cells names={["zoomFit", "pan", "rotate", "perspective", "greySheets"]} />
        {["windowRed", "greySolid", "cube", "clip"].map((n) => (
          <button key={n} aria-label={n} className="flex items-center"><span className="flex w-[25px] justify-center"><Icon name={n} /></span><span className="flex w-3 justify-center"><Caret /></span></button>
        ))}
      </div>
      <span className="ml-1.5 h-6 w-px bg-[#d4d4d4]" />
      <span className="ml-auto self-end pr-1.5 pb-2"><Caret /></span>
    </div>
  );
}

function SideBar() {
  const item = "flex w-full shrink-0 items-center justify-center pl-1";
  return (
    <aside className="flex w-8 shrink-0 flex-col items-center border-r border-[#a0a0a0] bg-[#dcdcdc]">
      <button aria-label="选项" className="flex h-[42px] w-full justify-center pt-1.5"><Icon name="gear" size={15} /></button>
      <button aria-label="装配导航器" className={clsName(item, "h-[42px]")}><Icon name="assembly" size={24} /></button>
      <button aria-label="约束导航器" className={clsName(item, "h-10")}><Icon name="constraint" size={23} /></button>
      <div className="-mr-px w-[30px] self-end border-y border-l border-[#a0a0a0] bg-white"><button aria-label="部件导航器" className="flex h-11 w-full items-center justify-center"><Icon name="partNav" size={23} /></button></div>
      <button aria-label="重用库" className={clsName(item, "h-[39px]")}><Icon name="books" size={23} /></button>
      {["info", "globe", "clock"].map((n) => <button key={n} aria-label={n} className={clsName(item, "h-[54px] pt-3")}><Icon name={n} size={23} /></button>)}
      {["rainbow", "wand", "tools"].map((n) => <button key={n} aria-label={n} className={clsName(item, "h-[42px]")}><Icon name={n} size={22} /></button>)}
    </aside>
  );
}

function Expander({ open }) {
  return <svg width="9" height="9" className="shrink-0" aria-hidden="true"><path d="M.5 .5h8v8h-8z" fill="#fff" stroke="#c9c9c9" /><path d={open ? "M2 4.500h5" : "M2 4.500h5M4.500 2v5"} stroke="#111" /></svg>;
}

function TreeCheck({ label }) {
  return (
    <span className="relative flex size-3">
      <input type="checkbox" defaultChecked aria-label={label} className="peer size-3 appearance-none border border-black bg-white" />
      <svg viewBox="0 0 16 16" className="pointer-events-none absolute inset-0 hidden size-3 peer-checked:block">{icons.tick}</svg>
    </span>
  );
}

const tree = [
  { label: "模型视图", icon: "views" },
  { label: "摄像机", icon: "camera", checked: true },
  { label: "用户表达式", icon: "folderEq" },
  { label: "模型历史记录", icon: "folder", open: true },
  { label: "基准坐标系 (0)", icon: "csys", child: true },
  { label: "草图 (1) \"SKETCH_...", icon: "sketch", child: true, bold: true },
];

function TreeRow({ row }) {
  if (row.child) {
    return (
      <div className="flex h-[19px] items-center gap-0.5 overflow-hidden whitespace-nowrap">
        <span className="ml-7 h-2.5 w-2.5 self-start border-b border-l border-dotted border-gray-400" />
        <TreeCheck label={row.label} />
        <Icon name={row.icon} />
        <span className={row.bold ? "font-bold" : ""}>{row.label}</span>
      </div>
    );
  }
  return (
    <div className="flex h-[19px] items-center whitespace-nowrap">
      <span className="ml-[5px] flex"><Expander open={row.open} /></span>
      <span className="w-[5px] border-t border-dotted border-gray-400" />
      {row.checked && <span className="mr-px"><Icon name="tick" size={15} /></span>}
      <Icon name={row.icon} />
      <span className="ml-[3px]">{row.label}</span>
    </div>
  );
}

function Navigator() {
  const rows = [...tree, ...Array(29).fill(null)];
  return (
    <section className="flex w-[332px] shrink-0 flex-col border-r border-[#8d9494] pr-[9px] pb-1.5 pl-1.5 text-[12px]">
      <header className="flex h-7 shrink-0 items-center justify-between pr-1.5 pl-1"><h2>部件导航器</h2><button aria-label="最大化" className="h-[11px] w-3 border border-t-2 border-black" /></header>
      <div className="flex min-h-0 flex-1 flex-col border-2 border-[#dedede]">
        <div className="h-0 flex-1 overflow-hidden">
          <table className="w-full table-fixed border-separate border-spacing-0">
            <colgroup><col /><col className="w-[100px]" /><col className="w-[13px]" /></colgroup>
            <thead>
              <tr className="bg-[#efefef] text-left">
                <th className="h-[21px] border-r border-b border-[#cfcfcf] p-0 pl-1.5 font-normal"><span className="flex items-center gap-[18px]">名称<Caret wide up /></span></th>
                <th className="border-r border-b border-[#cfcfcf] p-0 pl-1.5 font-normal">最新</th>
                <th className="overflow-hidden border-b border-[#cfcfcf] p-0 pl-1.5 font-normal whitespace-nowrap">附加</th>
              </tr>
            </thead>
            <tbody>
              {rows.map((row, i) => (
                <tr key={i} className="even:bg-[#f9f9f9]">
                  <td className="h-5 border-r border-b border-[#e6e6e6] p-0">{row && <TreeRow row={row} />}</td>
                  <td className="border-r border-b border-[#e6e6e6] p-0 pl-[5px]">{row?.child && <Icon name="tick" size={15} />}</td>
                  <td className="border-b border-[#e6e6e6] p-0" />
                </tr>
              ))}
            </tbody>
          </table>
        </div>
        <div className="flex h-[15px] shrink-0 items-center bg-[#f0f0f0]">
          <svg width="17" height="9"><path d="M11 1L7 4.500L11 8" fill="none" stroke="#444" strokeWidth="2" /></svg>
          <span className="h-full w-[216px] bg-[#cbcbcb]" />
          <svg width="17" height="9" className="ml-auto"><path d="M6 1L10 4.500L6 8" fill="none" stroke="#444" strokeWidth="2" /></svg>
        </div>
      </div>
      <div className="mt-px h-[5px] shrink-0 border border-[#a9a9a9] bg-[#dcdcdc]" />
      {["相关性", "细节", "预览"].map((s) => (
        <button key={s} className="flex h-6 shrink-0 items-center justify-between border-b-2 border-[#d3d3d3] pt-0.5 pr-1.5 pl-[7px] text-[14px] text-[#14627f]">{s}<Chevron /></button>
      ))}
    </section>
  );
}

function SquareButton({ icon, label, large, muted, active }) {
  return (
    <button aria-label={label} className={clsName("flex shrink-0 items-center justify-center border", large ? "size-8" : "size-6", muted ? "border-[#cfcfcf]" : "border-[#a5a5a5]", active ? "border-[#ffdf74] bg-[#ffdf74]" : "bg-white")}>
      <Icon name={icon} size={large ? 26 : 16} />
    </button>
  );
}

function Panel({ title, open, children }) {
  return (
    <section className="mb-[3px] border-b border-[#c2c2c2] bg-white">
      <button className="flex h-[23px] w-full items-center justify-between pt-0.5 pr-1.5 pl-[7px] text-[14px] leading-5 text-[#14627f]">{title}<Chevron up={open} /></button>
      {children}
    </section>
  );
}

function OriginRow() {
  return (
    <div className="mx-[9px] mt-0.5 flex h-10 items-start justify-between text-[#a3a3a3]"><span className="leading-8">指定原始曲线</span><SquareButton icon="originCurve" label="原始曲线" large muted /></div>
  );
}

function RuledDialog() {
  return (
    <div role="dialog" aria-label="直纹" className="absolute top-[181px] left-[349px] w-[328px] border border-[#dadada] bg-[#f0f0f0] text-[12px] text-[#222]">
      <header className="-mx-px -mt-px mb-1 flex h-6 items-center bg-[#569fb8] px-2 text-[14px] text-white">
        <Icon name="gear" size={14} /><h2 className="ml-[7px] flex-1">直纹</h2>
        <button aria-label="重置"><svg width="14" height="14" viewBox="0 0 14 14"><path d="M3.500 3A5 5 0 1 0 9 2.200" fill="none" stroke="#fff" strokeWidth="2" /><path d="M0 4h6V8z" fill="#fff" /></svg></button>
        <button aria-label="关闭" className="mr-px ml-[7px]"><svg width="12" height="12"><path d="M1 1l10 10M11 1L1 11" stroke="#fff" strokeWidth="2.200" /></svg></button>
      </header>
      <div className="px-[5px]">
        <Panel title="截面线串 1" open>
          <div className="mx-[9px] mt-[7px] flex h-8 items-center gap-0.5">
            <span className="flex flex-1 items-center gap-1"><Icon name="tick" />选择曲线或点 (1)</span>
            <SquareButton icon="reverse" label="反向" /><SquareButton icon="origin" label="指定点" /><SquareButton icon="curveRule" label="曲线" large />
          </div>
          <OriginRow />
        </Panel>
        <Panel title="截面线串 2" open>
          <div className="mx-[9px] mt-[7px] flex h-8 items-center gap-0.5">
            <span className="mr-0.5 flex h-full flex-1 items-center gap-1 bg-[#ffdf74]"><Icon name="tick" />选择曲线 (1)</span>
            <SquareButton icon="reverse" label="反向" /><SquareButton icon="curveRule" label="曲线" large active />
          </div>
          <OriginRow />
        </Panel>
        <Panel title="对齐" open>
          <div className="mx-[9px] h-[63px] pt-[7px]">
            <label className="flex h-5 items-center gap-[5px]"><input type="checkbox" className="size-[13px] appearance-none border border-[#333] bg-white checked:bg-[#14627f]" />保留形状</label>
            <div className="mt-[3px] flex items-center justify-between"><label htmlFor="align">对齐</label><Select id="align" label="对齐" options={["参数"]} className="h-[25px] w-[152px] pl-1" /></div>
          </div>
        </Panel>
        <Panel title="设置" />
        <Panel title="预览" />
      </div>
      <div className="flex justify-end gap-[5px] px-[15px] pt-2 pb-2.5">
        <button className="h-[25px] w-[54px] bg-[#71b3c9] whitespace-nowrap text-white">&lt; 确定 &gt;</button>
        <button className="h-[25px] w-[54px] border border-[#a5a5a5] bg-[#dddddd]">应用</button>
        <button className="h-[25px] w-[54px] border border-[#a5a5a5] bg-[#dddddd]">取消</button>
      </div>
      <Step n={3} className="top-[94px] left-[132px]" />
    </div>
  );
}

function Scene() {
  return (
    <svg className="absolute inset-0 h-full w-full" fontFamily="Liberation Sans, sans-serif" fontSize="13" aria-hidden="true">
      <g transform="translate(-364 -203)">
        <path d="M1237 547C1257 492 1294 448 1350 448C1418 448 1495 532 1566 532C1602 532 1632 505 1654 469L1637 616C1622 658 1600 692 1566 692C1503 692 1446 609 1385 609C1346 609 1315 640 1293 684Z" fill="#ffff10" />
        <path d="M1237 547L1293 684M1654 469L1637 616" stroke="#33330a" fill="none" />
        <path d="M1237 547C1257 492 1294 448 1350 448C1418 448 1495 532 1566 532C1602 532 1632 505 1654 469" stroke="#f0a050" strokeWidth="2.500" fill="none" />
        <path d="M1637 616C1622 658 1600 692 1566 692C1503 692 1446 609 1385 609C1346 609 1315 640 1293 684" stroke="#6fae4c" strokeWidth="1.500" fill="none" />
        <g fill="#c0a95c" stroke="#7d6c33" strokeWidth=".6">
          <path d="M1237 547L1264 486L1269 488ZM1274 472L1262 486L1270 490Z" />
          <path d="M1293 684L1322 625L1327 627ZM1332 612L1320 625L1329 629Z" />
        </g>
        <g fill="none" stroke="#4a4ae0">
          <path d="M1200 600L1202 650L1204 722M1196 715L1330 713M1202 650L1269 649L1271 713M1207 699L1275 698L1271 713M1202 650L1205 635L1206 650L1207 699L1206 712" />
        </g>
        <path d="M1200 586L1203 601H1197ZM1332 713L1320 710V717Z" fill="#0a0ae0" />
        <path d="M1202 662C1206 676 1206 690 1204 708C1200 690 1199 676 1202 662Z" fill="#3fa045" />
        <path d="M1208 715C1230 711 1245 712 1260 715C1245 718 1230 718 1208 715Z" fill="#cc3434" />
        <path d="M1210 683L1213 687L1209 690L1206 697ZM1204 712L1203 705L1207 703L1208 707Z" fill="#101c86" stroke="#101c86" />
        <text x="1195" y="583" fill="#2424e0">Y</text>
        <text x="1207" y="659" fill="#3a9a45">YC</text>
        <text x="1207" y="687" fill="#2424e0">Z</text>
        <text x="1191" y="702" fill="#2860dd">ZC</text>
        <text x="1246" y="709" fill="#cc3434">XC</text>
        <path d="M1411 704L1477 650" stroke="#a89a66" />
        <circle cx="1477" cy="650" r="4.500" fill="#1d9cf0" />
        <circle cx="1476" cy="649" r="1.500" fill="#8fd2ff" />
      </g>
    </svg>
  );
}

function Triad() {
  return (
    <svg width="72" height="64" className="absolute bottom-14 left-[52px]" fontFamily="Liberation Sans, sans-serif" fontSize="11" aria-hidden="true">
      <path d="M14 22L16 20H41V50L39 52H14ZM14 27H39V52M39 27L41 20" fill="#d2d3d5" stroke="#bbbcc0" />
      <path d="M13 52V12" stroke="#3fa045" strokeWidth="1.500" /><path d="M13 11L10 20H16Z" fill="#2f8f3a" />
      <path d="M13 53H50" stroke="#cc3434" strokeWidth="1.500" /><path d="M57 53L46 50V56Z" fill="#cc2828" />
      <path d="M13 52L15 43" stroke="#1226a8" strokeWidth="2" /><path d="M11 45L15 42L19 45L16 49Z" fill="#0c32c8" />
      <circle cx="13" cy="54" r="4" fill="#a9abb0" />
      <text x="9" y="8" fill="#3fa045">Y</text><text x="59" y="57" fill="#cc3434">X</text><text x="14" y="42" fontSize="9" fill="#5a6ce0">Z</text>
    </svg>
  );
}

function Viewport() {
  return (
    <div className="flex min-w-0 flex-1 flex-col">
      <div className="flex h-[23px] shrink-0 border-b-2 border-[#5f9dab]">
        <div className="flex h-[23px] w-[160px] items-center gap-1 bg-[#549fb8] pl-1.5 text-[12px] text-white"><Icon name="doc" />_model2.prt</div>
      </div>
      <div className="relative flex-1 bg-gradient-to-b from-[#b3b4b6] via-[#d2d3d5] to-[#e7e9ea] to-75%">
        <Scene />
        <Triad />
        <div className="absolute top-[490px] left-[966px] flex h-[29px] items-center gap-[7px] border border-[#a5a5a5] bg-[#efefef] px-1 text-[12px] whitespace-nowrap">
          <span className="grid grid-cols-2 gap-x-0.5 gap-y-0.5">{Array.from({ length: 12 }, (_, i) => <i key={i} className="size-0.5 bg-[#b5b5b5]" />)}</span>截面线串 1
        </div>
        <RuledDialog />
        <Step n={4} className="top-[317px] left-[1056px]" />
        <span className="absolute right-px bottom-[89px] h-[59px] w-2 rounded-full border border-[#555] bg-[repeating-linear-gradient(#55c47a_0_2px,#3f5a49_2px_3px)] shadow"><i className="block h-4 rounded-t-full bg-[#555]" /></span>
      </div>
    </div>
  );
}

function ImeBar() {
  return (
    <div className="absolute right-[411px] bottom-0 z-10 flex h-6 w-[139px] items-center justify-between rounded-t-sm border border-b-0 border-[#b5cbe2] bg-white pr-1 pl-[22px] text-[#0a6ccc]">
      <svg width="32" height="29" viewBox="0 0 32 30" className="absolute bottom-0 -left-4" aria-hidden="true"><path d="M1 5L26 0L31 26L6 30L4 24Z" fill="#ee5a22" stroke="#f0794b" strokeLinejoin="round" /><path d="M25 8C19 5 8 7 9 12C10 16 24 12 24 18C24 24 12 24 7 21" fill="none" stroke="#fff" strokeWidth="4.500" /></svg>
      <b className="text-[14px] leading-5">英</b>
      <svg width="12" height="14"><circle cx="3" cy="5" r="2" fill="currentColor" /><path d="M8 7h4v3l-2 3H8l1-3H8z" fill="currentColor" /></svg>
      <svg width="12" height="17"><rect x="3.500" y="0" width="5" height="10" rx="2.500" fill="currentColor" /><path d="M1 7C1 13 11 13 11 7M6 12v4M4 16h4" fill="none" stroke="currentColor" strokeWidth="1.500" /></svg>
      <svg width="15" height="13"><rect x=".8" y=".8" width="13.400" height="11.400" rx="1" fill="none" stroke="currentColor" strokeWidth="1.600" /><path d="M3 4h9M3 7h9M4 10h7" stroke="currentColor" strokeWidth="1.600" strokeDasharray="2 1" /></svg>
      <svg width="14" height="14"><path d="M0 1h6v5H0zM0 8h6v6H0zM8 8h6v6H8z" fill="currentColor" /><circle cx="11" cy="3.500" r="2.300" fill="none" stroke="currentColor" strokeWidth="1.500" /></svg>
    </div>
  );
}

export default function App() {
  return (
    <div className="flex h-screen min-h-[700px] flex-col overflow-hidden bg-white text-[#111] font-['Open_Sans','Noto_Sans_CJK_SC',sans-serif]">
      <Gradients />
      <TitleBar />
      <TabBar />
      <Ribbon />
      <SelectionBar />
      <main className="flex min-h-0 flex-1">
        <SideBar />
        <Navigator />
        <Viewport />
      </main>
      <footer className="relative flex h-[21px] shrink-0 items-center border-t border-[#a5a5a5] pl-[3px] text-[11px] font-bold">
        为截面 2 选择曲线
        <ImeBar />
        <span className="ml-auto flex gap-1 pr-[54px]"><Icon name="flag" /><Icon name="full" /></span>
        <span className="absolute right-2.5 bottom-2 text-[16px] leading-5 font-normal text-white/80 [text-shadow:1px_1px_1px_#bbb] font-['Liberation_Sans',sans-serif]">https://blog.csdn.net/weixin_43911798</span>
      </footer>
    </div>
  );
}
